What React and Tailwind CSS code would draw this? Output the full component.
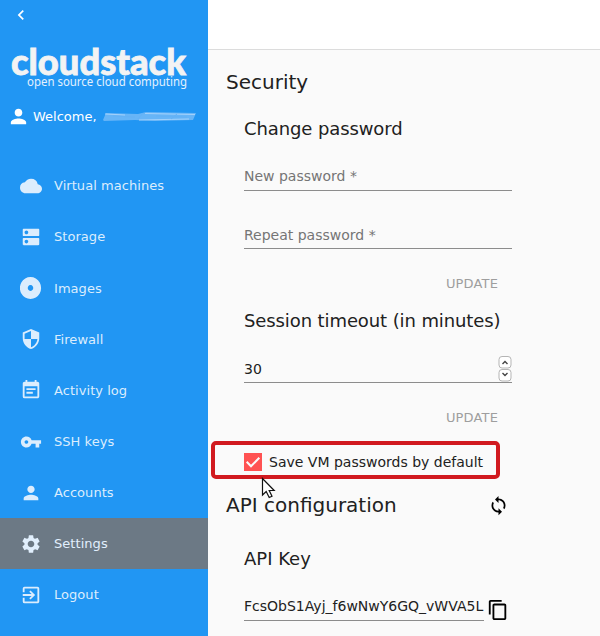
import {
  MdChevronLeft,
  MdCloud,
  MdContentCopy,
  MdDns,
  MdEventNote,
  MdExitToApp,
  MdPerson,
  MdSecurity,
  MdSettings,
  MdSync,
  MdVpnKey,
} from "react-icons/md";

function Disc({ size, className }) {
  return (
    <svg width={size} height={size} viewBox="0 0 22 22" fill="currentColor" className={className}>
      <path
        fillRule="evenodd"
        d="M10.5 0a10.6 11 0 1 0 .01 0zM10.5 8.1a2.7 2.9 0 1 1-.01 0z"
      />
    </svg>
  );
}

const items = [
  { label: "Virtual machines", Icon: MdCloud, pad: "pb-px", iconPad: "mb-px" },
  { label: "Storage", Icon: MdDns, pad: "pb-px", iconPad: "mb-px" },
  { label: "Images", Icon: Disc, iconPad: "mb-px" },
  { label: "Firewall", Icon: MdSecurity, iconPad: "mb-px" },
  { label: "Activity log", Icon: MdEventNote, iconPad: "mb-px" },
  { label: "SSH keys", Icon: MdVpnKey, iconPad: "mt-px" },
  { label: "Accounts", Icon: MdPerson, iconPad: "mt-px" },
  { label: "Settings", Icon: MdSettings, iconPad: "mt-px", active: true },
  { label: "Logout", Icon: MdExitToApp, iconPad: "mt-px" },
];

function Logo() {
  return (
    <svg className="block overflow-visible" width="208" height="54" viewBox="0 0 208 54">
      <text
        x="11"
        y="37"
        textLength="175"
        lengthAdjust="spacingAndGlyphs"
        fill="#f3f3f3"
        stroke="#f3f3f3"
        strokeWidth="0.8"
        className="font-['Lato',sans-serif] text-[36.5px] font-black"
      >
        cloudstack
      </text>
      <text
        x="27"
        y="48"
        textLength="160"
        lengthAdjust="spacingAndGlyphs"
        fill="#e3f1fe"
        className="font-['Noto_Sans',sans-serif] text-[12px]"
      >
        open source cloud computing
      </text>
    </svg>
  );
}

function Smudge() {
  return (
    <svg width="98" height="14" viewBox="0 0 98 14" fill="none">
      <path d="M2 10L5 3l32 1 8-2 50 1-3 7-38 1-20-1-31 1z" fill="#7fbff8" opacity=".75" />
      <path d="M4 4l20 1M44 3.500l50 1M38 10l50-1" stroke="#a5d2fb" strokeWidth="1" />
      <path d="M12 6l22 1M55 6l31 1M42 3l-5 6M70 9l6-5" stroke="#64b2f6" strokeWidth="1" />
    </svg>
  );
}

function Sidebar() {
  return (
    <aside className="flex w-[208px] shrink-0 flex-col bg-[#2196f3] text-[13px] text-white">
      <div className="flex h-[29px] items-center pl-[11px]">
        <MdChevronLeft size={20} />
      </div>
      <div className="mt-[9px]">
        <Logo />
      </div>
      <div className="mt-[14px] flex h-[22px] items-center pl-[7px]">
        <MdPerson size={23} className="mb-px" />
        <span className="ml-[3px] whitespace-pre">Welcome, </span>
        <Smudge />
      </div>
      <nav className="mt-[33px] tracking-[0.05px]">
        {items.map(({ label, Icon, active, pad, iconPad }) => (
          <div
            key={label}
            className={
              active
                ? "flex h-[51px] items-center gap-3 bg-[#6c7985] pl-5 text-[#e1effd]"
                : "flex h-[51px] items-center gap-3 pl-5 text-[#dcedfd]"
            }
          >
            <Icon size={22} className={iconPad} />
            <span className={pad}>{label}</span>
          </div>
        ))}
      </nav>
    </aside>
  );
}

function Update() {
  return (
    <div className="mt-[19px] flex h-8 w-[254px] items-center justify-end text-[13px] tracking-[0.15px] text-[#9e9e9e]">
      UPDATE
    </div>
  );
}

function Stepper() {
  return (
    <svg width="14" height="26" viewBox="0 0 14 26" fill="none">
      <rect x="1" y="0.500" width="12" height="11.500" rx="3" fill="#fff" stroke="#b5b5b5" />
      <rect x="1" y="13.500" width="12" height="11.500" rx="3" fill="#fff" stroke="#b5b5b5" />
      <path d="M4.500 8L7 5.500 9.500 8M4.500 17L7 19.500 9.500 17" stroke="#444" strokeWidth="1.400" />
    </svg>
  );
}

function Cursor() {
  return (
    <svg
      className="absolute left-[46px] top-[32px]"
      width="16"
      height="24"
      viewBox="0 0 16 24"
    >
      <path
        d="M1.500 1.500v16.500l3.700-3.500 3 6 2.800-1.300-2.800-5.700h5z"
        fill="#fff"
        stroke="#111"
        strokeWidth="1.200"
      />
    </svg>
  );
}

export default function App() {
  return (
    <div className="flex h-[636px] w-[600px] overflow-hidden bg-[#fafafa] font-['DejaVu_Sans',sans-serif] text-[#212121]">
      <Sidebar />
      <main className="flex-1">
        <div className="h-[50px] border-b border-[#dcdcdc] bg-white" />
        <h1 className="mt-4 ml-[18px] h-8 text-[20px] leading-8">Security</h1>
        <section className="ml-9 w-[268px]">
          <h2 className="mt-[14px] h-8 text-[18px] leading-[34px] tracking-[-0.1px]">
            Change password
          </h2>
          <div className="mt-[19px] h-7 border-b border-[#8c8c8c] text-[14px] leading-[26px] text-[#757575]">
            New password *
          </div>
          <div className="mt-[30px] h-7 border-b border-[#8c8c8c] text-[14px] leading-7 text-[#757575]">
            Repeat password *
          </div>
          <Update />
          <h2 className="mt-[5px] h-8 whitespace-nowrap text-[18px] leading-8 tracking-[-0.1px]">
            Session timeout (in minutes)
          </h2>
          <div className="mt-[18px] flex h-7 items-center justify-between border-b border-[#8c8c8c] text-[14px]">
            <span className="pt-px">30</span>
            <Stepper />
          </div>
          <Update />
        </section>
        <div className="relative mt-[7px] ml-[3px] flex h-[38px] w-[289px] items-center rounded-[5px] border-4 border-[#d11a1f] pt-1 pl-[29px] text-[14px]">
          <svg width="18" height="18" viewBox="0 0 18 18" fill="none">
            <rect width="18" height="18" fill="#ff5252" />
            <path d="M2.700 8.800L7 13.300l8.300-8.600" stroke="#fafafa" strokeWidth="2" />
          </svg>
          <span className="ml-[7px] whitespace-nowrap">Save VM passwords by default</span>
          <Cursor />
        </div>
        <div className="mt-[10px] ml-[18px] flex h-8 w-[283px] items-center justify-between">
          <h1 className="text-[20px] leading-8">API configuration</h1>
          <MdSync size={21} className="text-black" />
        </div>
        <section className="ml-9">
          <h2 className="mt-[22px] h-8 text-[18px] leading-8">API Key</h2>
          <div className="mt-[18px] flex items-center">
            <div className="h-7 w-[240px] overflow-hidden border-b border-[#8c8c8c] text-[14px] leading-[26px] whitespace-nowrap">
              FcsObS1Ayj_f6wNwY6GQ_vWVA5L
            </div>
            <MdContentCopy size={22} className="mt-[6px] ml-[3px] text-black" />
          </div>
        </section>
      </main>
    </div>
  );
}
